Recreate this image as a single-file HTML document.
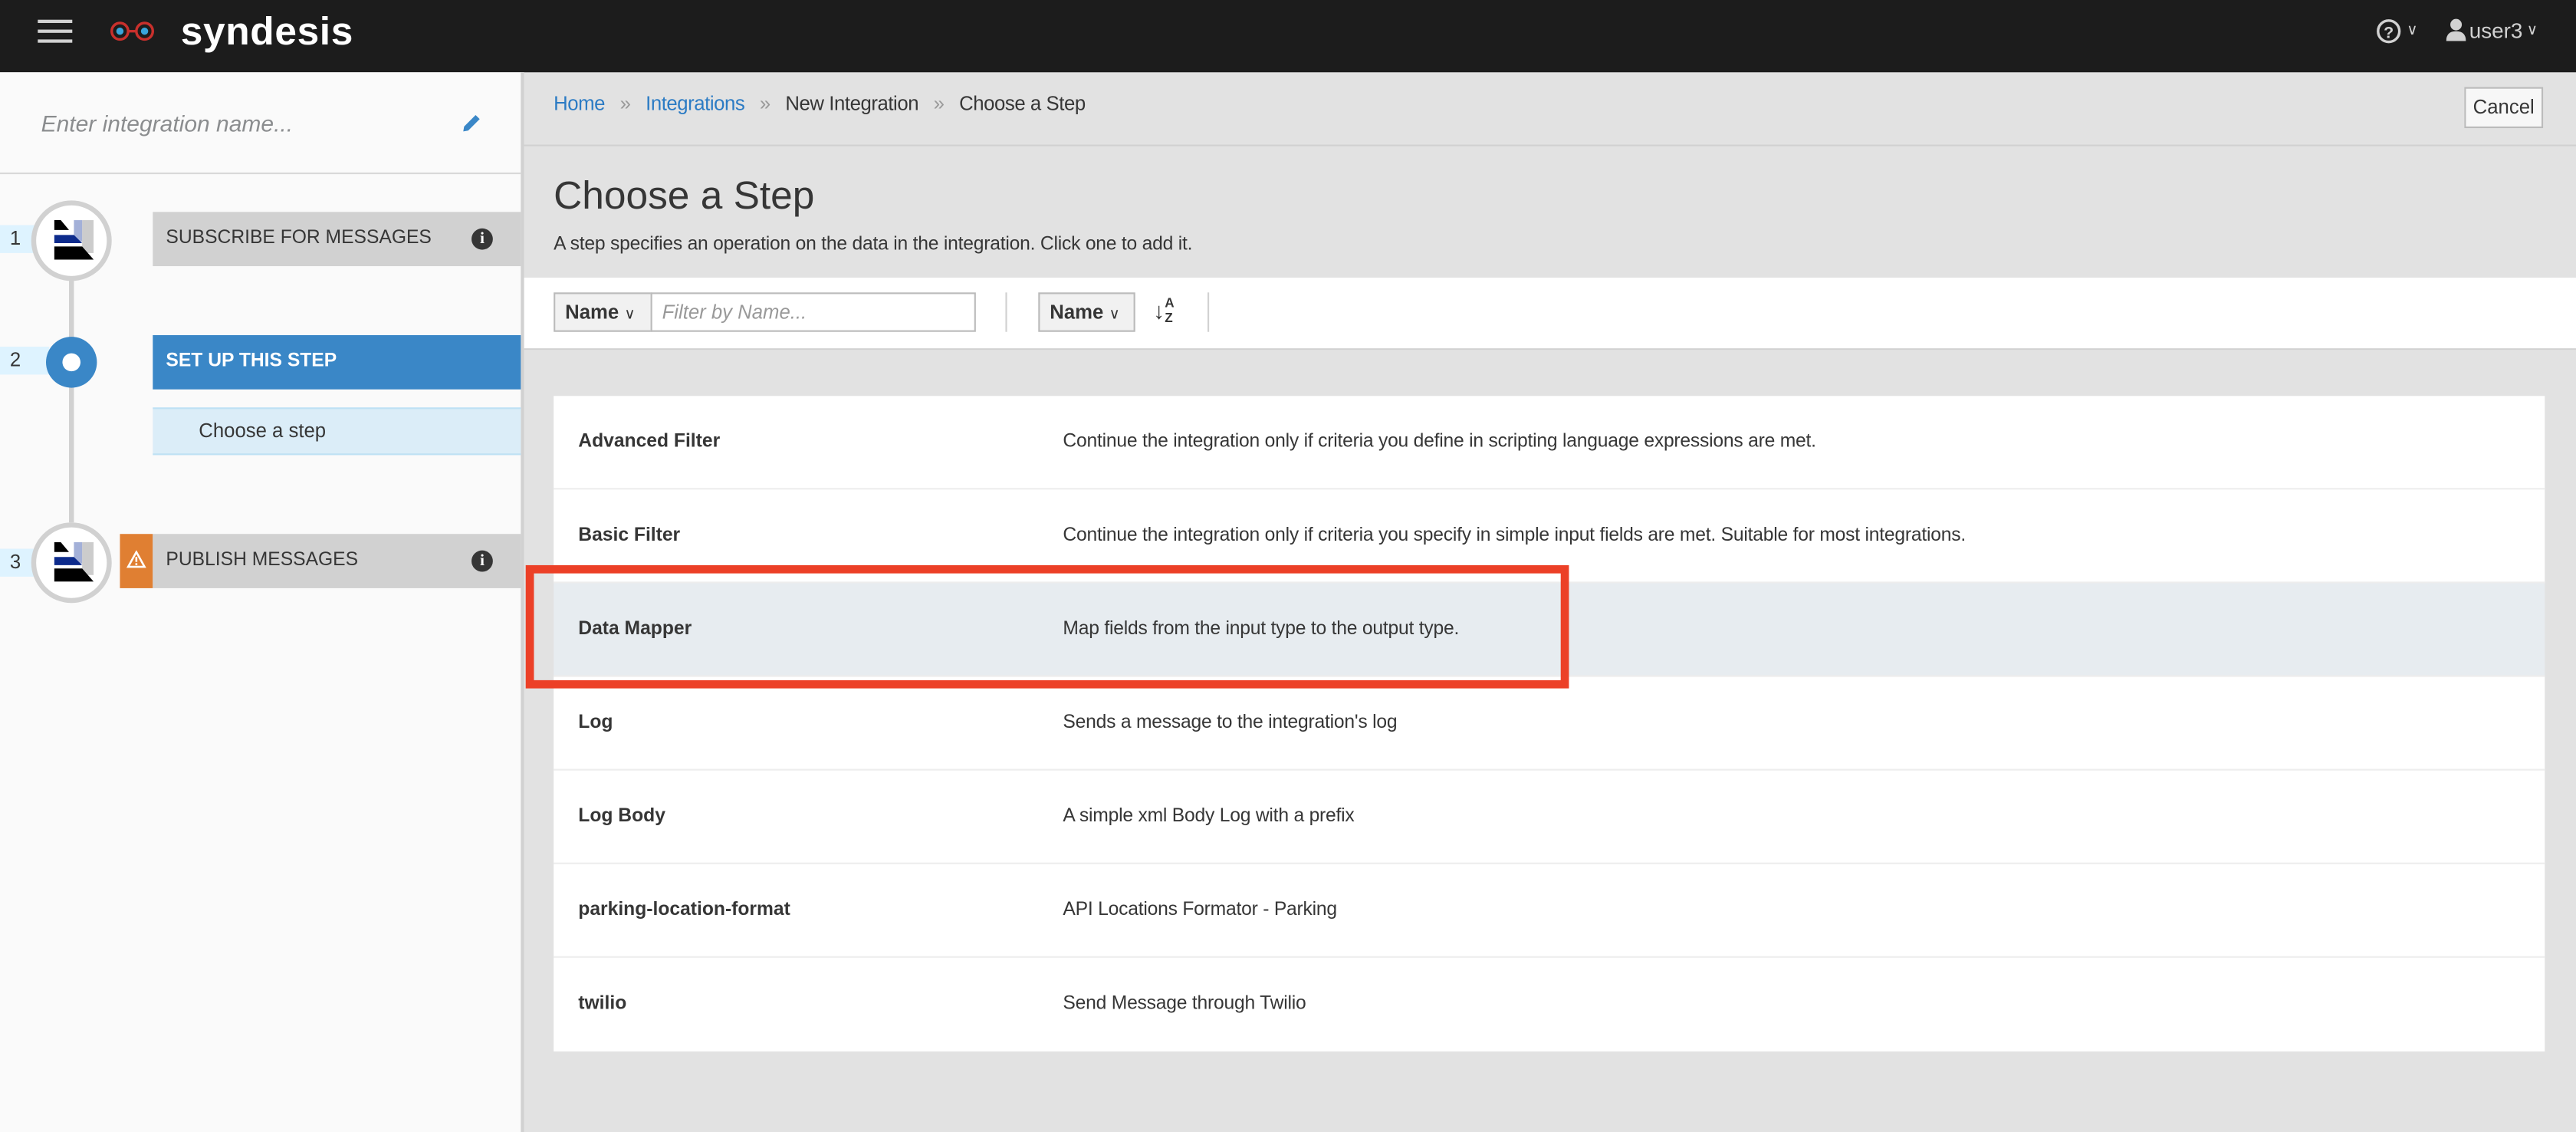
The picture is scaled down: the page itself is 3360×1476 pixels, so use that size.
<!DOCTYPE html>
<html><head><meta charset="utf-8">
<style>
html,body{margin:0;padding:0;width:3360px;height:1476px;overflow:hidden;background:#e2e2e2}
#w{position:absolute;left:0;top:0;width:1568px;height:689px;transform:scale(2.142857,2.142235);transform-origin:0 0;font-family:"Liberation Sans",sans-serif;color:#363636}
.a{position:absolute}
.hdr{left:0;top:0;width:1568px;height:44px;background:#1c1c1c}
.side{left:0;top:44px;width:317px;height:645px;background:#fafafa;border-right:2px solid #d1d1d1}
.bar{position:absolute;left:93px;width:224px;height:33px;background:#d1d1d1;font-size:11.5px;line-height:33px;padding-left:8px;box-sizing:border-box;color:#363636}
.num{position:absolute;left:0;width:30px;height:17px;background:#def3ff;font-size:12px;line-height:17px;padding-left:6px;box-sizing:border-box}
.circ{position:absolute;width:49px;height:49px;border:3px solid #d1d1d1;border-radius:50%;background:#fff;box-sizing:border-box}
.info{position:absolute;right:17px;top:10px;width:13px;height:13px;border-radius:50%;background:#363636;color:#fff;font:bold 10px/13px "Liberation Serif",serif;text-align:center}
.row{position:absolute;left:337px;width:1212px;height:56px;background:#fff;border-bottom:1px solid #ededed;font-size:11.5px;line-height:56px}
.row b{position:absolute;left:15px;font-weight:bold;color:#363636}
.row span{position:absolute;left:310px;color:#363636;letter-spacing:-0.1px}
.btn{position:absolute;background:#f1f1f1;border:1px solid #bbb;box-sizing:border-box;font-size:12px;font-weight:bold;line-height:22px;padding-left:6px;color:#363636}
</style></head><body><div id="w">
<div class="a hdr"></div>
<div class="a" style="left:23px;top:12px;width:21px;height:2px;background:#d1d1d1;box-shadow:0 6px 0 #d1d1d1,0 12px 0 #d1d1d1"></div>
<svg class="a" style="left:66px;top:12px" width="30" height="14" viewBox="0 0 30 14"><circle cx="7" cy="7" r="5" fill="none" stroke="#c9302c" stroke-width="1.6"/><circle cx="22" cy="7" r="5" fill="none" stroke="#c9302c" stroke-width="1.6"/><line x1="12" y1="7" x2="17" y2="7" stroke="#c9302c" stroke-width="1.6"/><circle cx="7" cy="7" r="2.2" fill="#39a5dc"/><circle cx="22" cy="7" r="2.2" fill="#39a5dc"/></svg>
<div class="a" style="left:110px;top:3px;font:bold 24px/34px 'Liberation Sans',sans-serif;color:#fff;letter-spacing:0.3px">syndesis</div>
<svg class="a" style="left:1446px;top:11px" width="16" height="16" viewBox="0 0 16 16"><circle cx="8" cy="8" r="6.5" fill="none" stroke="#d1d1d1" stroke-width="1.6"/><text x="8" y="12" text-anchor="middle" font-family="Liberation Sans" font-weight="bold" font-size="10" fill="#d1d1d1">?</text></svg>
<div class="a" style="left:1465px;top:13px;color:#d1d1d1;font-size:9px">&#x2228;</div>
<svg class="a" style="left:1489px;top:11px" width="12" height="14" viewBox="0 0 12 14"><circle cx="6" cy="4" r="3.5" fill="#d1d1d1"/><path d="M0 14 Q0 8 6 8 Q12 8 12 14Z" fill="#d1d1d1"/></svg>
<div class="a" style="left:1503px;top:11px;color:#d1d1d1;font-size:13px">user3</div>
<div class="a" style="left:1538px;top:13px;color:#d1d1d1;font-size:9px">&#x2228;</div>

<div class="a side">
<div class="a" style="left:25px;top:23px;font-style:italic;font-size:14px;color:#8b8d8f">Enter integration name...</div>
<svg class="a" style="left:281px;top:25px" width="12" height="12" viewBox="0 0 12 12"><path d="M1 11 L1.5 8 L8.5 1 L11 3.5 L4 10.5 Z" fill="#3a87c7"/></svg>
<div class="a" style="left:0;top:61px;width:317px;height:1px;background:#d8d8d8"></div>
</div>
<div class="a" style="left:42px;top:170px;width:3px;height:148px;background:#d1d1d1"></div>

<div class="num" style="top:137px">1</div>
<div class="circ" style="left:19px;top:122px"></div>
<svg class="a" style="left:33px;top:134px" width="24" height="24" viewBox="0 0 24 24"><rect x="17" y="0" width="7" height="20" fill="#ccc"/><rect x="12" y="0" width="5" height="13" fill="#a3b0d8"/><path d="M0 0 L4 0 L9 6 L0 6Z" fill="#000"/><path d="M0 9 L12 9 L17 14 L0 14Z" fill="#0d2b8c"/><path d="M0 16 L17 16 L24 24 L0 24Z" fill="#000"/></svg>
<div class="bar" style="top:129px">SUBSCRIBE FOR MESSAGES<div class="info">i</div></div>

<div class="num" style="top:211px">2</div>
<div class="a" style="left:28px;top:205px;width:31px;height:31px;border-radius:50%;background:#3a87c7"></div>
<div class="a" style="left:38px;top:215px;width:11px;height:11px;border-radius:50%;background:#fff"></div>
<div class="bar" style="top:204px;background:#3a87c7;color:#fff;font-weight:bold">SET UP THIS STEP</div>
<div class="a" style="left:93px;top:248px;width:224px;height:29px;background:#dbedf8;border-top:1px solid #bee1f4;border-bottom:1px solid #bee1f4;box-sizing:border-box;font-size:12px;line-height:27px;padding-left:28px">Choose a step</div>

<div class="num" style="top:334px">3</div>
<div class="circ" style="left:19px;top:318px"></div>
<svg class="a" style="left:33px;top:330px" width="24" height="24" viewBox="0 0 24 24"><rect x="17" y="0" width="7" height="20" fill="#ccc"/><rect x="12" y="0" width="5" height="13" fill="#a3b0d8"/><path d="M0 0 L4 0 L9 6 L0 6Z" fill="#000"/><path d="M0 9 L12 9 L17 14 L0 14Z" fill="#0d2b8c"/><path d="M0 16 L17 16 L24 24 L0 24Z" fill="#000"/></svg>
<div class="a" style="left:73px;top:325px;width:20px;height:33px;background:#e07f32"></div>
<svg class="a" style="left:77px;top:335px" width="12" height="11" viewBox="0 0 12 11"><path d="M6 1 L11 10 L1 10Z" fill="none" stroke="#fff" stroke-width="1.2"/><rect x="5.4" y="4" width="1.2" height="3" fill="#fff"/><rect x="5.4" y="7.8" width="1.2" height="1.2" fill="#fff"/></svg>
<div class="bar" style="top:325px">PUBLISH MESSAGES<div class="info">i</div></div>

<div class="a" style="left:337px;top:56px;font-size:12px;color:#363636;letter-spacing:-0.2px"><span style="color:#2b7bc4">Home</span> <span style="color:#999;margin:0 6px">»</span> <span style="color:#2b7bc4">Integrations</span> <span style="color:#999;margin:0 6px">»</span> New Integration <span style="color:#999;margin:0 6px">»</span> Choose a Step</div>
<div class="a" style="left:1500px;top:53px;width:48px;height:25px;background:#f7f7f7;border:1px solid #bbb;box-sizing:border-box;font-size:12px;line-height:23px;text-align:center;color:#363636">Cancel</div>
<div class="a" style="left:319px;top:88px;width:1249px;height:1px;background:#d1d1d1"></div>
<div class="a" style="left:337px;top:106px;font-size:24px;font-weight:300;color:#363636">Choose a Step</div>
<div class="a" style="left:337px;top:143px;font-size:11.5px;letter-spacing:-0.1px">A step specifies an operation on the data in the integration. Click one to add it.</div>
<div class="a" style="left:319px;top:169px;width:1249px;height:43px;background:#fff;border-bottom:1px solid #d1d1d1"></div>
<div class="btn" style="left:337px;top:178px;width:60px;height:24px">Name <span style="font-weight:normal;font-size:9px">&#x2228;</span></div>
<div class="a" style="left:396px;top:178px;width:198px;height:24px;border:1px solid #bbb;box-sizing:border-box;background:#fff;font-size:12px;font-style:italic;color:#999;line-height:22px;padding-left:6px">Filter by Name...</div>
<div class="a" style="left:612px;top:178px;width:1px;height:24px;background:#d1d1d1"></div>
<div class="btn" style="left:632px;top:178px;width:59px;height:24px">Name <span style="font-weight:normal;font-size:9px">&#x2228;</span></div>
<div class="a" style="left:702px;top:181px;font-size:14px;font-weight:bold">&#8595;</div>
<div class="a" style="left:709px;top:180px;font-size:8px;line-height:9px;font-weight:bold">A<br>Z</div>
<div class="a" style="left:735px;top:178px;width:1px;height:24px;background:#d1d1d1"></div>

<div class="row" style="top:241px"><b>Advanced Filter</b><span>Continue the integration only if criteria you define in scripting language expressions are met.</span></div>
<div class="row" style="top:298px"><b>Basic Filter</b><span>Continue the integration only if criteria you specify in simple input fields are met. Suitable for most integrations.</span></div>
<div class="row" style="top:355px;background:#e7ecf0"><b>Data Mapper</b><span>Map fields from the input type to the output type.</span></div>
<div class="row" style="top:412px"><b>Log</b><span>Sends a message to the integration's log</span></div>
<div class="row" style="top:469px"><b>Log Body</b><span>A simple xml Body Log with a prefix</span></div>
<div class="row" style="top:526px"><b>parking-location-format</b><span>API Locations Formator - Parking</span></div>
<div class="row" style="top:583px;height:57px;border-bottom:none"><b>twilio</b><span>Send Message through Twilio</span></div>
<div class="a" style="left:320px;top:344px;width:635px;height:75px;border:5px solid #ec4027;box-sizing:border-box"></div>
</div></body></html>
